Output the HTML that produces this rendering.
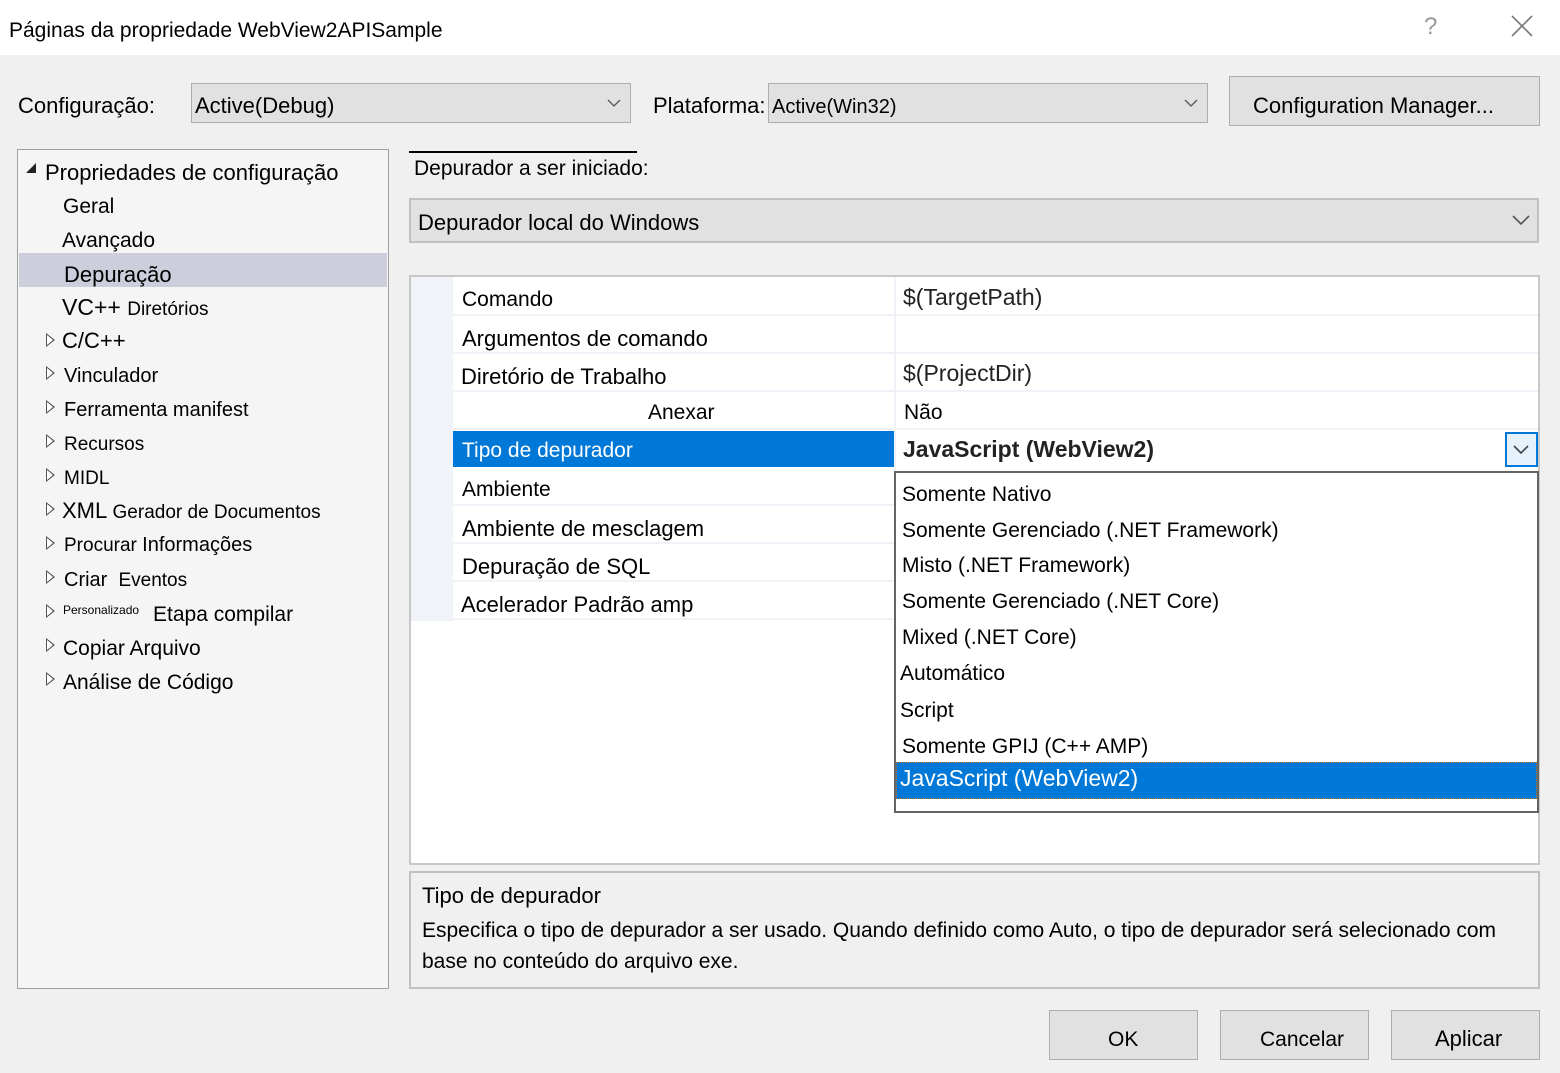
<!DOCTYPE html>
<html><head><meta charset="utf-8"><style>
*{margin:0;padding:0;box-sizing:border-box}
body{width:1560px;height:1073px;background:#f0f0f0;position:relative;overflow:hidden;font-family:"Liberation Sans",Arial,sans-serif;color:#000;font-size:21px}
.a{position:absolute;white-space:nowrap;line-height:1}
.box{position:absolute}
.tri{position:absolute;width:0;height:0}
.rt{border-left:9px solid #555;border-top:7px solid transparent;border-bottom:7px solid transparent}
.rt::after{content:"";position:absolute;left:-8px;top:-5px;border-left:6px solid #fff;border-top:5px solid transparent;border-bottom:5px solid transparent}
.row{position:absolute;left:453px;width:1085px;height:37px;border-bottom:2px solid #f0f2f7}
</style></head><body>
<div class="box" style="left:0;top:0;width:1560px;height:55px;background:#fff"></div>
<div class="a" style="left:9px;top:20px;font-size:21px">Páginas da propriedade WebView2APISample</div>
<div class="a" style="left:1424px;top:15px;font-size:24px;color:#999">?</div>
<svg class="box" style="left:1511px;top:15px" width="22" height="22"><path d="M1 1L21 21M21 1L1 21" stroke="#777" stroke-width="1.6"/></svg>

<div class="a" style="left:18px;top:95px;font-size:22px">Configuração:</div>
<div class="box" style="left:191px;top:83px;width:440px;height:40px;background:#e1e1e1;border:1px solid #adadad"></div>
<div class="a" style="left:195px;top:95px;font-size:22px">Active(Debug)</div>
<svg class="box" style="left:607px;top:98px" width="14" height="10"><path d="M1 2L7 8L13 2" fill="none" stroke="#555" stroke-width="1.3"/></svg>
<div class="a" style="left:653px;top:95px;font-size:22px">Plataforma:</div>
<div class="box" style="left:768px;top:83px;width:440px;height:40px;background:#e1e1e1;border:1px solid #adadad"></div>
<div class="a" style="left:772px;top:97px;font-size:20px">Active(Win32)</div>
<svg class="box" style="left:1184px;top:98px" width="14" height="10"><path d="M1 2L7 8L13 2" fill="none" stroke="#555" stroke-width="1.3"/></svg>
<div class="box" style="left:1229px;top:76px;width:311px;height:50px;background:#e1e1e1;border:1px solid #adadad"></div>
<div class="a" style="left:1253px;top:95px;font-size:22px">Configuration Manager...</div>

<!-- tree -->
<div class="box" style="left:17px;top:149px;width:372px;height:840px;background:#f5f5f5;border:1px solid #a0a0a0"></div>
<div class="box" style="left:19px;top:253px;width:368px;height:34px;background:#cccedb"></div>
<div class="tri" style="left:26px;top:163px;border-right:10px solid #222;border-top:10px solid transparent"></div>
<div class="a" style="left:45px;top:162px;font-size:22px">Propriedades de configuração</div>
<div class="a" style="left:63px;top:196px">Geral</div>
<div class="a" style="left:62px;top:230px">Avançado</div>
<div class="a" style="left:64px;top:264px;font-size:22px">Depuração</div>
<div class="a" style="left:62px;top:296px;font-size:23px">VC++ <span style="font-size:19px">Diretórios</span></div>
<div class="tri rt" style="left:46px;top:333px"></div><div class="a" style="left:62px;top:330px;font-size:22px">C/C++</div>
<div class="tri rt" style="left:46px;top:366px"></div><div class="a" style="left:64px;top:366px;font-size:20px">Vinculador</div>
<div class="tri rt" style="left:46px;top:400px"></div><div class="a" style="left:64px;top:400px;font-size:20px">Ferramenta manifest</div>
<div class="tri rt" style="left:46px;top:434px"></div><div class="a" style="left:64px;top:435px;font-size:19px">Recursos</div>
<div class="tri rt" style="left:46px;top:468px"></div><div class="a" style="left:64px;top:469px;font-size:19px">MIDL</div>
<div class="tri rt" style="left:46px;top:502px"></div><div class="a" style="left:62px;top:500px;font-size:22px">XML <span style="font-size:19px">Gerador de Documentos</span></div>
<div class="tri rt" style="left:46px;top:536px"></div><div class="a" style="left:64px;top:535px;font-size:19px">Procurar <span style="font-size:20px">Informações</span></div>
<div class="tri rt" style="left:46px;top:570px"></div><div class="a" style="left:64px;top:570px;font-size:20px">Criar &nbsp;<span style="font-size:19px">Eventos</span></div>
<div class="tri rt" style="left:46px;top:604px"></div><div class="a" style="left:63px;top:604px;font-size:12px">Personalizado</div><div class="a" style="left:153px;top:604px;font-size:21px">Etapa compilar</div>
<div class="tri rt" style="left:46px;top:638px"></div><div class="a" style="left:63px;top:638px;font-size:21px">Copiar Arquivo</div>
<div class="tri rt" style="left:46px;top:672px"></div><div class="a" style="left:63px;top:672px;font-size:21px">Análise de Código</div>

<!-- right -->
<div class="box" style="left:409px;top:151px;width:228px;height:2px;background:#000"></div>
<div class="a" style="left:414px;top:158px">Depurador a ser iniciado:</div>
<div class="box" style="left:409px;top:198px;width:1130px;height:45px;background:#e1e1e1;border:2px solid #c0c0c0"></div>
<div class="a" style="left:418px;top:212px;font-size:22px">Depurador local do Windows</div>
<svg class="box" style="left:1512px;top:214px" width="18" height="12"><path d="M1 2L9 10L17 2" fill="none" stroke="#555" stroke-width="1.6"/></svg>

<div class="box" style="left:409px;top:275px;width:1131px;height:590px;background:#fff;border:2px solid #c8c8c8"></div>
<div class="box" style="left:411px;top:277px;width:42px;height:344px;background:#f0f3f8"></div>
<div class="box" style="left:894px;top:277px;width:2px;height:344px;background:#f0f2f7"></div>
<div class="row" style="top:279px"></div>
<div class="row" style="top:317px"></div>
<div class="row" style="top:355px"></div>
<div class="row" style="top:393px"></div>
<div class="row" style="top:469px"></div>
<div class="row" style="top:507px"></div>
<div class="row" style="top:545px"></div>
<div class="row" style="top:583px"></div>
<div class="a" style="left:462px;top:289px">Comando</div>
<div class="a" style="left:903px;top:286px;font-size:23px;color:#222">$(TargetPath)</div>
<div class="a" style="left:462px;top:328px;font-size:22px">Argumentos de comando</div>
<div class="a" style="left:461px;top:366px;font-size:22px">Diretório de Trabalho</div>
<div class="a" style="left:903px;top:362px;font-size:23px;color:#222">$(ProjectDir)</div>
<div class="a" style="left:648px;top:402px">Anexar</div>
<div class="a" style="left:904px;top:402px">Não</div>
<div class="box" style="left:453px;top:431px;width:441px;height:36px;background:#0078d7"></div>
<div class="a" style="left:462px;top:440px;color:#fff">Tipo de depurador</div>
<div class="a" style="left:903px;top:438px;font-size:23px;font-weight:bold;color:#222">JavaScript (WebView2)</div>
<div class="box" style="left:1505px;top:432px;width:33px;height:35px;background:#e5f1fb;border:2px solid #0078d7"></div>
<svg class="box" style="left:1513px;top:445px" width="16" height="10"><path d="M1 1L8 8L15 1" fill="none" stroke="#444" stroke-width="1.6"/></svg>
<div class="a" style="left:462px;top:479px">Ambiente</div>
<div class="a" style="left:462px;top:518px;font-size:22px">Ambiente de mesclagem</div>
<div class="a" style="left:462px;top:556px;font-size:22px">Depuração de SQL</div>
<div class="a" style="left:461px;top:594px;font-size:22px">Acelerador Padrão amp</div>

<!-- dropdown -->
<div class="box" style="left:894px;top:471px;width:645px;height:342px;background:#fff;border:2px solid #646464"></div>
<div class="a" style="left:902px;top:484px">Somente Nativo</div>
<div class="a" style="left:902px;top:520px">Somente Gerenciado (.NET Framework)</div>
<div class="a" style="left:902px;top:555px">Misto (.NET Framework)</div>
<div class="a" style="left:902px;top:591px">Somente Gerenciado (.NET Core)</div>
<div class="a" style="left:902px;top:627px">Mixed (.NET Core)</div>
<div class="a" style="left:900px;top:663px">Automático</div>
<div class="a" style="left:900px;top:700px">Script</div>
<div class="a" style="left:902px;top:736px">Somente GPIJ (C++ AMP)</div>
<div class="box" style="left:896px;top:762px;width:641px;height:37px;background:#0078d7;border:1px dotted #c07000"></div>
<div class="a" style="left:900px;top:767px;font-size:23px;color:#fff">JavaScript (WebView2)</div>

<!-- description -->
<div class="box" style="left:409px;top:871px;width:1131px;height:118px;background:#f0f0f0;border:2px solid #c0c0c0"></div>
<div class="a" style="left:422px;top:885px;font-size:22px">Tipo de depurador</div>
<div class="a" style="left:422px;top:920px">Especifica o tipo de depurador a ser usado. Quando definido como Auto, o tipo de depurador será selecionado com</div>
<div class="a" style="left:422px;top:951px">base no conteúdo do arquivo exe.</div>

<div class="box" style="left:1049px;top:1010px;width:149px;height:50px;background:#e1e1e1;border:1px solid #adadad"></div>
<div class="a" style="left:1108px;top:1029px">OK</div>
<div class="box" style="left:1220px;top:1010px;width:149px;height:50px;background:#e1e1e1;border:1px solid #adadad"></div>
<div class="a" style="left:1260px;top:1029px">Cancelar</div>
<div class="box" style="left:1391px;top:1010px;width:149px;height:50px;background:#e1e1e1;border:1px solid #adadad"></div>
<div class="a" style="left:1435px;top:1028px;font-size:22px">Aplicar</div>
</body></html>
